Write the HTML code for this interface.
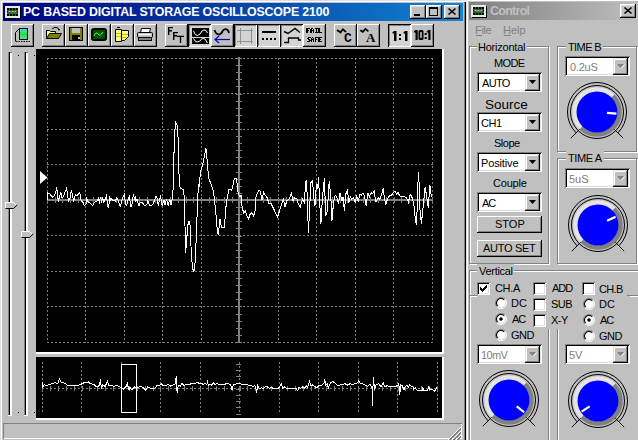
<!DOCTYPE html><html><head><meta charset="utf-8"><style>
*{margin:0;padding:0;box-sizing:border-box}
html,body{width:638px;height:440px;overflow:hidden;background:#c0c0c0;font-family:"Liberation Sans",sans-serif;font-size:11px;color:#000;position:relative}
.a{position:absolute}
.rz{position:absolute;background:#c0c0c0;box-shadow:inset -1px -1px #000,inset 1px 1px #fff,inset -2px -2px #808080}
.sk{position:absolute;background:#d4d4d4;box-shadow:inset 1px 1px #000,inset -1px -1px #fff,inset 2px 2px #808080}
.fld{position:absolute;background:#fff;box-shadow:inset 1px 1px #808080,inset -1px -1px #fff,inset 2px 2px #000,inset -2px -2px #dfdfdf}
.grp{position:absolute;border:1px solid #808080;box-shadow:inset 1px 1px #fff,1px 1px #fff}
.t{position:absolute;white-space:pre;line-height:1}
svg{position:absolute;overflow:visible}
</style></head><body>
<div class="a" style="left:0;top:0;width:466px;height:460px;box-shadow:inset 1px 1px #dfdfdf,inset 2px 2px #fff,inset -1px -1px #000,inset -2px -2px #808080"></div>
<div class="a" style="left:3px;top:3px;width:460px;height:18px;background:linear-gradient(to right,#000080,#1084d0)"></div>
<svg style="left:5px;top:6px" width="16" height="13" shape-rendering="crispEdges"><rect x="1" y="1" width="15" height="12" fill="#000"/><rect x="0" y="0" width="15" height="12" fill="#e8e8e8"/><rect x="2" y="2" width="11" height="8" fill="#207020"/><g fill="#000"><rect x="2" y="2" width="2" height="2"/><rect x="2" y="5" width="2" height="2"/><rect x="2" y="8" width="2" height="2"/><rect x="5" y="2" width="2" height="2"/><rect x="5" y="5" width="2" height="2"/><rect x="5" y="8" width="2" height="2"/><rect x="8" y="2" width="2" height="2"/><rect x="8" y="5" width="2" height="2"/><rect x="8" y="8" width="2" height="2"/><rect x="11" y="2" width="2" height="2"/><rect x="11" y="5" width="2" height="2"/><rect x="11" y="8" width="2" height="2"/></g><path d="M3 6.5 L4.5 5 L6 6.5 L7.5 5 L9 6.5 L10.5 5 L12 6.5" stroke="#e0ffe0" fill="none" shape-rendering="auto"/></svg>
<div class="t" style="left:23px;top:6px;font-size:12.4px;letter-spacing:-0.17px;color:#fff;font-weight:bold">PC BASED DIGITAL STORAGE OSCILLOSCOPE 2100</div>
<div class="rz" style="left:410px;top:5px;width:16px;height:14px;box-shadow:inset -1px -1px #000,inset 1px 1px #fff,inset -2px -2px #808080,inset 2px 2px #dfdfdf"></div>
<div class="rz" style="left:426px;top:5px;width:16px;height:14px;box-shadow:inset -1px -1px #000,inset 1px 1px #fff,inset -2px -2px #808080,inset 2px 2px #dfdfdf"></div>
<div class="rz" style="left:444px;top:5px;width:16px;height:14px;box-shadow:inset -1px -1px #000,inset 1px 1px #fff,inset -2px -2px #808080,inset 2px 2px #dfdfdf"></div>
<div class="a" style="left:414px;top:14px;width:6px;height:2px;background:#000"></div>
<div class="a" style="left:429px;top:7px;width:9px;height:9px;border:1px solid #000;border-top-width:2px"></div>
<svg style="left:448px;top:8px" width="8" height="7"><path d="M0.5 0.5 L7.5 6.5 M7.5 0.5 L0.5 6.5" stroke="#000" stroke-width="1.6"/></svg>
<div class="rz" style="left:11px;top:24px;width:23px;height:23px"></div>
<div class="rz" style="left:42px;top:24px;width:23px;height:23px"></div>
<div class="rz" style="left:65px;top:24px;width:23px;height:23px"></div>
<div class="rz" style="left:88px;top:24px;width:23px;height:23px"></div>
<div class="rz" style="left:111px;top:24px;width:23px;height:23px"></div>
<div class="rz" style="left:134px;top:24px;width:23px;height:23px"></div>
<div class="rz" style="left:165px;top:24px;width:23px;height:23px"></div>
<div class="rz" style="left:211px;top:24px;width:23px;height:23px"></div>
<div class="rz" style="left:303px;top:24px;width:23px;height:23px"></div>
<div class="rz" style="left:334px;top:24px;width:23px;height:23px"></div>
<div class="rz" style="left:357px;top:24px;width:23px;height:23px"></div>
<div class="rz" style="left:411px;top:24px;width:23px;height:23px"></div>
<div class="sk" style="left:188px;top:24px;width:23px;height:23px"></div>
<div class="sk" style="left:234px;top:24px;width:23px;height:23px"></div>
<div class="sk" style="left:257px;top:24px;width:23px;height:23px"></div>
<div class="sk" style="left:280px;top:24px;width:23px;height:23px"></div>
<div class="sk" style="left:388px;top:24px;width:23px;height:23px"></div>
<svg style="left:11px;top:24px" width="23" height="23"><defs><linearGradient id="g1" x1="0" y1="0" x2="0" y2="1"><stop offset="0" stop-color="#40e0e0"/><stop offset="0.55" stop-color="#20e040"/><stop offset="1" stop-color="#60e0c0"/></linearGradient></defs><path d="M8.5 4.5 L4.5 8.5 V17.5" stroke="#000" fill="none"/><rect x="8.5" y="4.5" width="8" height="11" fill="url(#g1)" stroke="#000"/><path d="M5 17.5 H19" stroke="#000" stroke-dasharray="1.5 1"/></svg>
<svg style="left:46px;top:26px" width="16" height="14"><path d="M6 3 Q9 0 12 2 L13 4" stroke="#000" fill="none"/><path d="M12 3 l2 0 l-1 2z" fill="#000"/><path d="M0.5 4.5 L3.5 4.5 L4.5 5.5 L9.5 5.5 L9.5 7.5 L0.5 12.5 Z" fill="#ffff80" stroke="#000"/><path d="M0.5 12.5 L3.5 7.5 L15.5 7.5 L12.5 12.5 Z" fill="#808000" stroke="#000"/></svg>
<svg style="left:69px;top:27px" width="15" height="14"><rect x="0.5" y="0.5" width="13" height="13" fill="#808000" stroke="#000"/><rect x="3" y="1" width="8" height="5" fill="#c0c0c0"/><rect x="3" y="8" width="8" height="5" fill="#000"/><rect x="9" y="10" width="2" height="2" fill="#c0c0c0"/></svg>
<svg style="left:91px;top:28px" width="17" height="14"><rect x="0.5" y="0.5" width="15" height="12" rx="2" fill="#000" stroke="#000"/><rect x="2" y="2" width="12" height="9" fill="#005000"/><path d="M3 8 Q5 3 7 6 T12 4" stroke="#40ff40" fill="none"/></svg>
<svg style="left:113px;top:27px" width="17" height="16"><path d="M2.5 2.5 L8.5 2.5 L8.5 14.5 L2.5 14.5 Z" fill="#ffff80" stroke="#000"/><path d="M8.5 3.5 L15.5 3.5 L15.5 9.5 L11.5 13.5 L8.5 13.5 Z" fill="#ffff80" stroke="#000"/><path d="M4 0.5 H7" stroke="#000"/><path d="M3 6.5 H8 M3 9.5 H8 M9 7.5 H15 M9 10.5 H13" stroke="#c0c000"/></svg>
<svg style="left:137px;top:28px" width="17" height="13"><path d="M4.5 0.5 L13.5 0.5 L12.5 4.5 L3.5 4.5 Z" fill="#fff" stroke="#000"/><rect x="0.5" y="4.5" width="15" height="5" rx="1" fill="#c0c0c0" stroke="#000"/><rect x="1.5" y="9.5" width="13" height="3" fill="#808080" stroke="#000"/><path d="M2 6.5 H14" stroke="#fff"/></svg>
<svg style="left:162px;top:22px" width="28" height="26"><path d="M6.7 5 V13 M6 5.6 H11 M6 8.7 H10 M11.7 10 V18 M11 10.6 H16 M11 13.7 H15 M15 14.4 H22 M18.5 14 V21" stroke="#000" stroke-width="1.4" fill="none"/></svg>
<svg style="left:192px;top:28px" width="17" height="16"><rect x="0" y="0" width="17" height="9" fill="#000"/><rect x="0" y="10" width="17" height="6" fill="#000"/><path d="M1.5 3 Q3 8 5.5 7.5 Q8 7 10 3 Q12 1 14 2.5 L15.5 5" stroke="#fff" fill="none"/><path d="M1.5 10.5 Q3 14 5 14 Q8 14 9.5 11 Q11 10 13 11 L15.5 15" stroke="#fff" fill="none"/></svg>
<svg style="left:213px;top:27px" width="18" height="17"><path d="M1.5 3 Q3 7.5 6 7.5 Q8 7.5 10 3.5 Q12 1.5 14 2.5 Q15.5 3.5 16 6" stroke="#000" stroke-width="1.8" fill="none"/><path d="M2 12.5 H17" stroke="#0000c0" stroke-width="1.2"/><path d="M6 9 L2 12.5 L6 16" stroke="#0000c0" fill="none" stroke-width="1.2"/></svg>
<svg style="left:236px;top:27px" width="18" height="18"><path d="M4.5 1 V17 M15.5 1 V17 M1 3.5 H17 M1 14.5 H17" stroke="#909090"/></svg>
<svg style="left:259px;top:28px" width="18" height="16"><rect x="3" y="3" width="14" height="2" fill="#000"/><g fill="#000"><rect x="3" y="10" width="2" height="2"/><rect x="7" y="10" width="2" height="2"/><rect x="11" y="10" width="2" height="2"/><rect x="15" y="10" width="2" height="2"/></g></svg>
<svg style="left:280px;top:24px" width="23" height="23"><path d="M4 7.5 L8 9.5 L15 4.5 L20 8.5" stroke="#000" fill="none" stroke-width="1.5"/><path d="M4 18.5 H8.5 V14 H18.5 V16 H21" stroke="#000" fill="none" stroke-width="1.3"/></svg>
<svg style="left:300px;top:22px" width="26" height="26" shape-rendering="crispEdges"><g fill="#000"><rect x="6" y="6" width="1" height="1"/><rect x="7" y="6" width="1" height="1"/><rect x="8" y="6" width="1" height="1"/><rect x="9" y="6" width="1" height="1"/><rect x="6" y="7" width="1" height="1"/><rect x="7" y="7" width="1" height="1"/><rect x="6" y="8" width="1" height="1"/><rect x="7" y="8" width="1" height="1"/><rect x="8" y="8" width="1" height="1"/><rect x="6" y="9" width="1" height="1"/><rect x="7" y="9" width="1" height="1"/><rect x="6" y="10" width="1" height="1"/><rect x="7" y="10" width="1" height="1"/><rect x="11" y="6" width="1" height="1"/><rect x="12" y="6" width="1" height="1"/><rect x="10" y="7" width="1" height="1"/><rect x="11" y="7" width="1" height="1"/><rect x="13" y="7" width="1" height="1"/><rect x="10" y="8" width="1" height="1"/><rect x="11" y="8" width="1" height="1"/><rect x="12" y="8" width="1" height="1"/><rect x="13" y="8" width="1" height="1"/><rect x="10" y="9" width="1" height="1"/><rect x="11" y="9" width="1" height="1"/><rect x="13" y="9" width="1" height="1"/><rect x="10" y="10" width="1" height="1"/><rect x="11" y="10" width="1" height="1"/><rect x="13" y="10" width="1" height="1"/><rect x="15" y="6" width="1" height="1"/><rect x="16" y="6" width="1" height="1"/><rect x="17" y="6" width="1" height="1"/><rect x="16" y="7" width="1" height="1"/><rect x="16" y="8" width="1" height="1"/><rect x="16" y="9" width="1" height="1"/><rect x="15" y="10" width="1" height="1"/><rect x="16" y="10" width="1" height="1"/><rect x="17" y="10" width="1" height="1"/><rect x="18" y="6" width="1" height="1"/><rect x="19" y="6" width="1" height="1"/><rect x="18" y="7" width="1" height="1"/><rect x="19" y="7" width="1" height="1"/><rect x="18" y="8" width="1" height="1"/><rect x="19" y="8" width="1" height="1"/><rect x="18" y="9" width="1" height="1"/><rect x="19" y="9" width="1" height="1"/><rect x="18" y="10" width="1" height="1"/><rect x="19" y="10" width="1" height="1"/><rect x="20" y="10" width="1" height="1"/><rect x="21" y="10" width="1" height="1"/><rect x="8" y="15" width="1" height="1"/><rect x="9" y="15" width="1" height="1"/><rect x="10" y="15" width="1" height="1"/><rect x="7" y="16" width="1" height="1"/><rect x="8" y="16" width="1" height="1"/><rect x="8" y="17" width="1" height="1"/><rect x="9" y="17" width="1" height="1"/><rect x="9" y="18" width="1" height="1"/><rect x="10" y="18" width="1" height="1"/><rect x="7" y="19" width="1" height="1"/><rect x="8" y="19" width="1" height="1"/><rect x="9" y="19" width="1" height="1"/><rect x="12" y="15" width="1" height="1"/><rect x="11" y="16" width="1" height="1"/><rect x="13" y="16" width="1" height="1"/><rect x="11" y="17" width="1" height="1"/><rect x="12" y="17" width="1" height="1"/><rect x="13" y="17" width="1" height="1"/><rect x="11" y="18" width="1" height="1"/><rect x="13" y="18" width="1" height="1"/><rect x="11" y="19" width="1" height="1"/><rect x="13" y="19" width="1" height="1"/><rect x="15" y="15" width="1" height="1"/><rect x="16" y="15" width="1" height="1"/><rect x="17" y="15" width="1" height="1"/><rect x="15" y="16" width="1" height="1"/><rect x="15" y="17" width="1" height="1"/><rect x="16" y="17" width="1" height="1"/><rect x="15" y="18" width="1" height="1"/><rect x="15" y="19" width="1" height="1"/><rect x="18" y="15" width="1" height="1"/><rect x="19" y="15" width="1" height="1"/><rect x="20" y="15" width="1" height="1"/><rect x="21" y="15" width="1" height="1"/><rect x="18" y="16" width="1" height="1"/><rect x="19" y="16" width="1" height="1"/><rect x="18" y="17" width="1" height="1"/><rect x="19" y="17" width="1" height="1"/><rect x="20" y="17" width="1" height="1"/><rect x="18" y="18" width="1" height="1"/><rect x="19" y="18" width="1" height="1"/><rect x="18" y="19" width="1" height="1"/><rect x="19" y="19" width="1" height="1"/><rect x="20" y="19" width="1" height="1"/><rect x="21" y="19" width="1" height="1"/></g></svg>
<svg style="left:336px;top:28px" width="20" height="16"><path d="M1 2 L4.5 4.5 L6.8 1.2 L10 4" stroke="#000" stroke-width="1.7" fill="none"/></svg><div class="t" style="left:344px;top:32px;font-size:13px;font-weight:bold;font-family:'Liberation Mono',monospace">C</div>
<svg style="left:359px;top:28px" width="20" height="16"><path d="M1.3 2.2 L3.8 3.8 L6.4 0.9 L9.4 3.4" stroke="#000" stroke-width="1.7" fill="none"/></svg><div class="t" style="left:366px;top:31px;font-size:13px;font-weight:bold;font-family:'Liberation Serif',serif">A</div>
<svg style="left:384px;top:20px" width="56" height="30"><g fill="#000"><path d="M10 11 h2.5 v10 h-2.5 v-7.5 h-1.5 v-1.3 z"/><rect x="15" y="14" width="2" height="2"/><rect x="15" y="18" width="2" height="2"/><path d="M21 11 h2.5 v10 h-2.5 v-7.5 h-1.5 v-1.3 z"/><path d="M31.5 10 h2.2 v10 h-2.2 v-7.5 h-1.5 v-1.3 z"/><path d="M36 10 h2 q1.5 0 1.5 1.5 v7 q0 1.5 -1.5 1.5 h-2 q-1.5 0 -1.5 -1.5 v-7 q0 -1.5 1.5 -1.5 z M36.2 12 v6 h1.6 v-6 z" fill-rule="evenodd"/><rect x="40.7" y="13" width="2" height="2"/><rect x="40.7" y="17" width="2" height="2"/><path d="M44.3 10 h2.2 v10 h-2.2 v-7.5 h-1.5 v-1.3 z"/></g></svg>
<div class="a" style="left:8px;top:52px;width:4px;height:364px;background:#fff;box-shadow:inset 0 -1px #fff,inset 1px 0 #808080,inset 2px 0 #000,inset 0 1px #808080"></div>
<div class="a" style="left:24px;top:52px;width:4px;height:364px;background:#fff;box-shadow:inset 0 -1px #fff,inset 1px 0 #808080,inset 2px 0 #000,inset 0 1px #808080"></div>
<div class="a" style="left:18px;top:55px;width:1px;height:1px;background:#000"></div>
<div class="a" style="left:18px;top:412px;width:1px;height:1px;background:#000"></div>
<div class="a" style="left:34px;top:55px;width:1px;height:1px;background:#000"></div>
<div class="a" style="left:34px;top:412px;width:1px;height:1px;background:#000"></div>
<svg style="left:5px;top:202px" width="13" height="7"><path d="M0 0 H8 L12 3.5 L8 7 H0 Z" fill="#c0c0c0"/><path d="M0.5 6.5 V0.5 H8.5 L11.5 3.5" stroke="#fff" fill="none"/><path d="M0.5 6.5 H8.5 L12.2 3" stroke="#000" fill="none"/></svg>
<svg style="left:21px;top:231px" width="13" height="7"><path d="M0 0 H8 L12 3.5 L8 7 H0 Z" fill="#c0c0c0"/><path d="M0.5 6.5 V0.5 H8.5 L11.5 3.5" stroke="#fff" fill="none"/><path d="M0.5 6.5 H8.5 L12.2 3" stroke="#000" fill="none"/></svg>
<div class="a" style="left:36px;top:49px;width:408px;height:305px;background:#fff"></div>
<div class="a" style="left:36px;top:49px;width:406px;height:303px;background:#000"></div>
<svg style="left:36px;top:49px" width="406" height="303"><path d="M11.5 9 V294" stroke="#808080" stroke-dasharray="2 2"/><path d="M49.5 9 V294" stroke="#808080" stroke-dasharray="2 2"/><path d="M88.5 9 V294" stroke="#808080" stroke-dasharray="2 2"/><path d="M126.5 9 V294" stroke="#808080" stroke-dasharray="2 2"/><path d="M165.5 9 V294" stroke="#808080" stroke-dasharray="2 2"/><path d="M242.5 9 V294" stroke="#808080" stroke-dasharray="2 2"/><path d="M280.5 9 V294" stroke="#808080" stroke-dasharray="2 2"/><path d="M319.5 9 V294" stroke="#808080" stroke-dasharray="2 2"/><path d="M357.5 9 V294" stroke="#808080" stroke-dasharray="2 2"/><path d="M396.5 9 V294" stroke="#808080" stroke-dasharray="2 2"/><path d="M11 9.5 H397" stroke="#808080" stroke-dasharray="2 2"/><path d="M11 44.5 H397" stroke="#808080" stroke-dasharray="2 2"/><path d="M11 80.5 H397" stroke="#808080" stroke-dasharray="2 2"/><path d="M11 115.5 H397" stroke="#808080" stroke-dasharray="2 2"/><path d="M11 186.5 H397" stroke="#808080" stroke-dasharray="2 2"/><path d="M11 222.5 H397" stroke="#808080" stroke-dasharray="2 2"/><path d="M11 257.5 H397" stroke="#808080" stroke-dasharray="2 2"/><path d="M11 293.5 H397" stroke="#808080" stroke-dasharray="2 2"/><rect x="202" y="8" width="2" height="286" fill="#808080"/><rect x="11" y="150" width="386" height="2" fill="#808080"/><rect x="200" y="9" width="6" height="1" fill="#808080"/><rect x="200" y="16" width="6" height="1" fill="#808080"/><rect x="200" y="23" width="6" height="1" fill="#808080"/><rect x="200" y="30" width="6" height="1" fill="#808080"/><rect x="200" y="37" width="6" height="1" fill="#808080"/><rect x="200" y="45" width="6" height="1" fill="#808080"/><rect x="200" y="52" width="6" height="1" fill="#808080"/><rect x="200" y="59" width="6" height="1" fill="#808080"/><rect x="200" y="66" width="6" height="1" fill="#808080"/><rect x="200" y="73" width="6" height="1" fill="#808080"/><rect x="200" y="80" width="6" height="1" fill="#808080"/><rect x="200" y="87" width="6" height="1" fill="#808080"/><rect x="200" y="94" width="6" height="1" fill="#808080"/><rect x="200" y="101" width="6" height="1" fill="#808080"/><rect x="200" y="108" width="6" height="1" fill="#808080"/><rect x="200" y="115" width="6" height="1" fill="#808080"/><rect x="200" y="123" width="6" height="1" fill="#808080"/><rect x="200" y="130" width="6" height="1" fill="#808080"/><rect x="200" y="137" width="6" height="1" fill="#808080"/><rect x="200" y="144" width="6" height="1" fill="#808080"/><rect x="200" y="151" width="6" height="1" fill="#808080"/><rect x="200" y="158" width="6" height="1" fill="#808080"/><rect x="200" y="165" width="6" height="1" fill="#808080"/><rect x="200" y="172" width="6" height="1" fill="#808080"/><rect x="200" y="179" width="6" height="1" fill="#808080"/><rect x="200" y="187" width="6" height="1" fill="#808080"/><rect x="200" y="194" width="6" height="1" fill="#808080"/><rect x="200" y="201" width="6" height="1" fill="#808080"/><rect x="200" y="208" width="6" height="1" fill="#808080"/><rect x="200" y="215" width="6" height="1" fill="#808080"/><rect x="200" y="222" width="6" height="1" fill="#808080"/><rect x="200" y="229" width="6" height="1" fill="#808080"/><rect x="200" y="236" width="6" height="1" fill="#808080"/><rect x="200" y="243" width="6" height="1" fill="#808080"/><rect x="200" y="250" width="6" height="1" fill="#808080"/><rect x="200" y="257" width="6" height="1" fill="#808080"/><rect x="200" y="265" width="6" height="1" fill="#808080"/><rect x="200" y="272" width="6" height="1" fill="#808080"/><rect x="200" y="279" width="6" height="1" fill="#808080"/><rect x="200" y="286" width="6" height="1" fill="#808080"/><rect x="200" y="293" width="6" height="1" fill="#808080"/><rect x="11" y="148" width="1" height="6" fill="#808080"/><rect x="19" y="148" width="1" height="6" fill="#808080"/><rect x="26" y="148" width="1" height="6" fill="#808080"/><rect x="34" y="148" width="1" height="6" fill="#808080"/><rect x="42" y="148" width="1" height="6" fill="#808080"/><rect x="50" y="148" width="1" height="6" fill="#808080"/><rect x="57" y="148" width="1" height="6" fill="#808080"/><rect x="65" y="148" width="1" height="6" fill="#808080"/><rect x="73" y="148" width="1" height="6" fill="#808080"/><rect x="80" y="148" width="1" height="6" fill="#808080"/><rect x="88" y="148" width="1" height="6" fill="#808080"/><rect x="96" y="148" width="1" height="6" fill="#808080"/><rect x="103" y="148" width="1" height="6" fill="#808080"/><rect x="111" y="148" width="1" height="6" fill="#808080"/><rect x="119" y="148" width="1" height="6" fill="#808080"/><rect x="126" y="148" width="1" height="6" fill="#808080"/><rect x="134" y="148" width="1" height="6" fill="#808080"/><rect x="142" y="148" width="1" height="6" fill="#808080"/><rect x="150" y="148" width="1" height="6" fill="#808080"/><rect x="157" y="148" width="1" height="6" fill="#808080"/><rect x="165" y="148" width="1" height="6" fill="#808080"/><rect x="173" y="148" width="1" height="6" fill="#808080"/><rect x="180" y="148" width="1" height="6" fill="#808080"/><rect x="188" y="148" width="1" height="6" fill="#808080"/><rect x="196" y="148" width="1" height="6" fill="#808080"/><rect x="204" y="148" width="1" height="6" fill="#808080"/><rect x="211" y="148" width="1" height="6" fill="#808080"/><rect x="219" y="148" width="1" height="6" fill="#808080"/><rect x="227" y="148" width="1" height="6" fill="#808080"/><rect x="234" y="148" width="1" height="6" fill="#808080"/><rect x="242" y="148" width="1" height="6" fill="#808080"/><rect x="250" y="148" width="1" height="6" fill="#808080"/><rect x="257" y="148" width="1" height="6" fill="#808080"/><rect x="265" y="148" width="1" height="6" fill="#808080"/><rect x="273" y="148" width="1" height="6" fill="#808080"/><rect x="280" y="148" width="1" height="6" fill="#808080"/><rect x="288" y="148" width="1" height="6" fill="#808080"/><rect x="296" y="148" width="1" height="6" fill="#808080"/><rect x="304" y="148" width="1" height="6" fill="#808080"/><rect x="311" y="148" width="1" height="6" fill="#808080"/><rect x="319" y="148" width="1" height="6" fill="#808080"/><rect x="327" y="148" width="1" height="6" fill="#808080"/><rect x="334" y="148" width="1" height="6" fill="#808080"/><rect x="342" y="148" width="1" height="6" fill="#808080"/><rect x="350" y="148" width="1" height="6" fill="#808080"/><rect x="358" y="148" width="1" height="6" fill="#808080"/><rect x="365" y="148" width="1" height="6" fill="#808080"/><rect x="373" y="148" width="1" height="6" fill="#808080"/><rect x="381" y="148" width="1" height="6" fill="#808080"/><rect x="388" y="148" width="1" height="6" fill="#808080"/><rect x="396" y="148" width="1" height="6" fill="#808080"/><polygon points="4,122 11.5,128.5 4,135" fill="#fff"/><polyline points="11.4,151.4 11.7,144.0 12.7,144.3 14.1,145.3 16.2,148.4 17.9,147.0 19.6,144.3 20.6,138.5 21.6,144.6 22.3,152.8 23.7,147.4 24.7,143.0 26.0,148.7 27.4,147.4 28.8,144.0 30.5,139.5 31.5,145.3 32.5,151.8 34.2,148.7 35.2,141.6 36.6,146.3 37.6,152.8 39.3,145.7 40.7,147.0 43.4,143.6 44.7,146.6 45.1,152.6 46.8,152.9 47.9,156.1 48.9,156.5 50.0,155.0 50.7,148.3 51.4,152.2 52.5,152.9 53.9,154.0 55.3,155.0 56.7,156.8 58.1,153.6 59.5,152.9 60.9,151.9 62.3,149.4 63.4,152.9 64.5,148.3 65.5,152.2 66.6,148.0 67.6,154.0 68.7,150.1 69.7,150.1 70.4,145.2 71.2,152.9 72.2,159.3 72.9,156.5 73.6,148.7 74.7,150.8 75.7,149.8 76.8,151.5 77.9,151.2 79.3,151.9 80.7,149.0 81.7,149.4 82.8,154.0 83.5,155.0 84.4,157.9 85.4,152.9 87.2,147.6 88.2,145.2 89.3,153.6 90.3,156.5 91.4,153.6 92.5,148.7 93.5,146.9 94.6,157.2 95.6,157.9 96.7,150.8 97.4,145.2 98.5,150.1 99.2,148.3 99.9,152.2 100.9,150.1 102.0,153.6 103.0,156.5 104.1,154.0 105.2,153.6 106.6,154.0 108.0,156.1 109.4,156.5 110.8,155.7 111.9,151.9 112.9,155.0 114.3,156.8 115.7,156.5 117.1,154.7 118.6,151.2 119.6,148.0 120.7,147.3 121.4,152.2 122.4,156.5 123.5,150.5 124.6,147.6 125.6,153.6 126.3,157.2 127.4,152.9 128.1,150.8 129.1,156.4 130.5,150.3 132.2,156.4 133.8,150.3 135.2,156.4 136.7,147.2 137.3,136.0 137.6,131.5 138.2,91.5 139.5,73.3 141.8,77.8 142.5,111.0 143.4,136.0 144.4,139.0 147.5,141.0 148.5,150.3 149.0,177.0 149.6,203.5 150.6,193.3 151.6,177.0 153.0,171.8 154.3,177.0 155.0,197.3 156.3,217.8 157.7,223.0 158.8,217.8 160.4,187.0 161.4,156.4 162.4,136.0 163.1,137.0 164.4,123.7 166.6,115.5 168.5,107.3 169.9,99.2 171.3,112.8 172.6,129.0 175.9,137.3 177.5,142.8 179.4,159.0 181.3,181.0 182.2,186.4 184.0,170.0 185.4,178.2 188.4,178.2 190.3,153.7 193.0,140.0 195.8,141.4 198.5,129.1 200.4,129.1 202.2,144.6 203.8,147.8 205.0,146.2 206.2,158.9 207.7,163.7 209.3,162.1 210.9,166.9 212.5,170.0 214.1,165.3 215.7,163.7 217.3,166.9 218.9,163.7 220.0,147.8 221.3,144.6 222.8,141.4 224.4,142.2 226.0,151.0 227.6,143.0 229.2,146.2 230.8,147.8 233.2,155.0 234.8,154.2 237.2,158.9 239.5,163.7 241.6,167.7 243.5,162.1 245.9,154.2 247.5,150.2 249.1,158.1 250.7,151.8 253.0,150.2 255.4,144.6 257.0,151.8 258.6,148.6 261.0,150.2 262.6,155.7 264.2,158.1 266.6,150.2 268.2,153.4 269.7,133.5 270.5,131.1 271.4,152.6 272.4,184.0 273.8,155.7 275.0,133.5 276.6,131.9 277.7,147.8 278.9,157.3 280.4,135.1 281.7,139.8 282.5,127.9 283.6,151.0 284.9,174.8 286.5,147.8 288.4,128.7 289.7,166.9 291.3,162.1 293.2,131.9 294.8,147.8 296.0,171.6 297.6,152.6 299.2,146.2 300.8,147.8 302.4,155.0 304.0,143.8 305.9,151.8 307.2,147.8 308.4,162.1 310.0,144.6 311.6,141.4 312.7,154.2 314.3,147.8 315.9,150.2 317.5,148.6 319.1,153.4 320.7,147.0 322.3,152.6 323.8,145.4 325.4,146.2 327.0,143.8 328.6,147.0 330.2,157.3 331.8,143.8 333.4,147.8 335.0,143.8 336.6,144.6 338.2,142.2 339.7,152.6 340.6,152.3 342.2,148.4 343.8,150.7 345.7,145.2 347.3,138.8 348.2,147.6 349.8,155.5 351.7,149.2 353.6,146.8 355.7,146.0 357.3,143.6 358.9,142.0 360.5,145.2 362.0,143.6 363.6,146.8 366.0,147.6 368.4,147.6 370.8,149.2 372.4,153.1 374.3,145.2 376.4,149.2 378.0,157.1 379.5,171.4 380.7,176.2 381.6,139.6 382.7,122.9 383.8,158.7 385.4,174.6 387.0,158.7 389.1,138.0 390.7,147.6 392.3,158.7 393.8,135.6 395.4,147.6 396.2,148.4" stroke="#fff" fill="none" stroke-width="1" shape-rendering="crispEdges"/></svg>
<div class="a" style="left:36px;top:357px;width:408px;height:63px;background:#fff"></div>
<div class="a" style="left:36px;top:357px;width:406px;height:61px;background:#000"></div>
<svg style="left:36px;top:357px" width="406" height="61"><path d="M6.5 5 V56" stroke="#808080" stroke-dasharray="2 2"/><path d="M45.5 5 V56" stroke="#808080" stroke-dasharray="2 2"/><path d="M85.5 5 V56" stroke="#808080" stroke-dasharray="2 2"/><path d="M124.5 5 V56" stroke="#808080" stroke-dasharray="2 2"/><path d="M164.5 5 V56" stroke="#808080" stroke-dasharray="2 2"/><path d="M203.5 5 V56" stroke="#808080" stroke-dasharray="2 2"/><path d="M243.5 5 V56" stroke="#808080" stroke-dasharray="2 2"/><path d="M282.5 5 V56" stroke="#808080" stroke-dasharray="2 2"/><path d="M322.5 5 V56" stroke="#808080" stroke-dasharray="2 2"/><path d="M361.5 5 V56" stroke="#808080" stroke-dasharray="2 2"/><path d="M401.5 5 V56" stroke="#808080" stroke-dasharray="2 2"/><path d="M6 31.5 H402" stroke="#808080" stroke-dasharray="2 2"/><rect x="200" y="7" width="5" height="1" fill="#808080"/><rect x="200" y="13" width="5" height="1" fill="#808080"/><rect x="200" y="19" width="5" height="1" fill="#808080"/><rect x="200" y="26" width="5" height="1" fill="#808080"/><rect x="200" y="32" width="5" height="1" fill="#808080"/><rect x="200" y="38" width="5" height="1" fill="#808080"/><rect x="200" y="44" width="5" height="1" fill="#808080"/><rect x="200" y="50" width="5" height="1" fill="#808080"/><rect x="200" y="57" width="5" height="1" fill="#808080"/><rect x="6" y="29" width="1" height="5" fill="#808080"/><rect x="14" y="29" width="1" height="5" fill="#808080"/><rect x="22" y="29" width="1" height="5" fill="#808080"/><rect x="30" y="29" width="1" height="5" fill="#808080"/><rect x="38" y="29" width="1" height="5" fill="#808080"/><rect x="46" y="29" width="1" height="5" fill="#808080"/><rect x="53" y="29" width="1" height="5" fill="#808080"/><rect x="61" y="29" width="1" height="5" fill="#808080"/><rect x="69" y="29" width="1" height="5" fill="#808080"/><rect x="77" y="29" width="1" height="5" fill="#808080"/><rect x="85" y="29" width="1" height="5" fill="#808080"/><rect x="93" y="29" width="1" height="5" fill="#808080"/><rect x="101" y="29" width="1" height="5" fill="#808080"/><rect x="109" y="29" width="1" height="5" fill="#808080"/><rect x="117" y="29" width="1" height="5" fill="#808080"/><rect x="124" y="29" width="1" height="5" fill="#808080"/><rect x="132" y="29" width="1" height="5" fill="#808080"/><rect x="140" y="29" width="1" height="5" fill="#808080"/><rect x="148" y="29" width="1" height="5" fill="#808080"/><rect x="156" y="29" width="1" height="5" fill="#808080"/><rect x="164" y="29" width="1" height="5" fill="#808080"/><rect x="172" y="29" width="1" height="5" fill="#808080"/><rect x="180" y="29" width="1" height="5" fill="#808080"/><rect x="188" y="29" width="1" height="5" fill="#808080"/><rect x="196" y="29" width="1" height="5" fill="#808080"/><rect x="204" y="29" width="1" height="5" fill="#808080"/><rect x="211" y="29" width="1" height="5" fill="#808080"/><rect x="219" y="29" width="1" height="5" fill="#808080"/><rect x="227" y="29" width="1" height="5" fill="#808080"/><rect x="235" y="29" width="1" height="5" fill="#808080"/><rect x="243" y="29" width="1" height="5" fill="#808080"/><rect x="251" y="29" width="1" height="5" fill="#808080"/><rect x="259" y="29" width="1" height="5" fill="#808080"/><rect x="267" y="29" width="1" height="5" fill="#808080"/><rect x="275" y="29" width="1" height="5" fill="#808080"/><rect x="282" y="29" width="1" height="5" fill="#808080"/><rect x="290" y="29" width="1" height="5" fill="#808080"/><rect x="298" y="29" width="1" height="5" fill="#808080"/><rect x="306" y="29" width="1" height="5" fill="#808080"/><rect x="314" y="29" width="1" height="5" fill="#808080"/><rect x="322" y="29" width="1" height="5" fill="#808080"/><rect x="330" y="29" width="1" height="5" fill="#808080"/><rect x="338" y="29" width="1" height="5" fill="#808080"/><rect x="346" y="29" width="1" height="5" fill="#808080"/><rect x="354" y="29" width="1" height="5" fill="#808080"/><rect x="362" y="29" width="1" height="5" fill="#808080"/><rect x="369" y="29" width="1" height="5" fill="#808080"/><rect x="377" y="29" width="1" height="5" fill="#808080"/><rect x="385" y="29" width="1" height="5" fill="#808080"/><rect x="393" y="29" width="1" height="5" fill="#808080"/><rect x="401" y="29" width="1" height="5" fill="#808080"/><polyline points="6.5,25.5 6.8,30.0 8.4,27.4 10.3,28.7 12.8,27.4 15.9,26.8 19.0,25.5 21.6,26.8 23.4,21.8 24.7,24.9 27.2,25.5 29.7,26.8 31.0,28.0 34.1,28.0 37.2,28.7 40.4,28.7 42.9,28.0 46.0,26.8 48.5,25.5 51.0,25.5 52.3,24.9 53.5,26.2 55.4,26.8 57.9,27.4 59.8,29.3 62.3,29.3 63.6,28.0 64.4,21.8 65.4,31.8 66.7,28.0 69.2,29.3 71.5,24.3 72.7,28.7 74.8,28.0 77.4,29.3 79.9,28.7 81.5,28.7 84.0,29.9 85.9,31.2 87.2,32.4 89.0,30.6 90.3,29.3 91.3,25.5 92.2,30.6 93.0,33.0 94.0,29.9 95.3,33.0 96.6,31.8 98.4,29.9 101.0,31.2 103.5,29.9 106.0,29.9 108.5,31.8 109.7,33.0 111.6,29.9 114.0,31.2 116.6,31.2 119.1,31.2 121.0,28.0 122.9,28.7 125.4,26.8 127.3,28.7 129.8,28.7 132.3,27.4 134.8,29.3 137.3,28.0 139.2,26.8 140.2,19.3 141.1,35.6 142.3,28.0 144.2,29.3 146.1,26.2 148.0,28.7 150.5,27.4 153.0,28.0 154.9,26.8 156.7,26.8 159.0,26.2 162.2,25.5 163.4,26.8 165.3,26.2 167.2,27.4 169.0,26.2 170.9,28.0 171.6,23.0 172.2,28.7 174.0,26.8 175.3,28.7 177.2,25.5 179.1,27.4 181.0,26.2 182.8,27.4 185.3,27.4 187.9,27.4 190.4,26.8 192.9,26.8 194.8,28.0 196.0,33.0 197.3,27.4 199.1,27.4 201.0,26.8 203.5,26.8 206.7,27.4 209.8,27.4 211.7,28.0 214.2,28.0 216.7,29.3 218.6,28.7 219.8,30.6 220.5,36.2 221.7,28.7 223.6,31.8 225.5,30.6 227.4,31.8 229.2,29.9 231.5,29.9 233.4,31.2 235.3,30.3 237.8,31.8 240.3,31.2 242.2,31.8 244.0,29.3 245.3,26.8 246.6,31.2 248.4,29.9 250.3,31.2 254.1,31.2 257.8,31.2 260.3,31.8 261.6,33.7 262.9,30.6 264.7,31.2 266.6,29.9 268.5,31.2 270.4,28.7 271.6,29.9 273.5,24.3 274.8,28.7 276.6,28.0 279.2,29.9 281.0,30.6 282.9,28.7 286.1,28.0 287.9,26.2 288.6,22.4 289.8,28.0 291.1,26.8 292.3,31.2 294.2,26.2 296.7,24.3 299.2,26.2 301.1,28.0 304.2,28.0 306.5,27.4 309.0,26.8 311.5,28.0 314.0,26.8 316.5,27.4 319.0,26.8 321.6,25.6 322.8,23.7 324.7,26.8 326.6,26.8 329.1,28.0 331.6,29.3 334.1,27.4 336.0,31.2 336.6,49.4 337.2,19.9 338.5,31.8 340.4,27.4 342.9,26.8 344.8,29.9 347.3,26.2 349.1,29.9 351.0,28.7 353.5,29.3 356.0,29.9 358.5,29.9 361.1,28.7 362.9,26.8 363.6,38.1 364.8,28.0 366.1,28.2 368.1,33.0 369.2,29.6 370.9,28.2 372.3,30.2 373.7,27.5 375.0,28.9 376.8,29.6 377.8,32.3 379.2,30.9 381.2,33.0 383.3,33.7 386.1,33.7 386.8,29.6 387.4,33.3 389.5,33.3 391.6,33.3 393.0,29.6 394.0,33.0 396.4,32.3 398.5,34.4 399.9,32.3 401.2,29.6" stroke="#fff" fill="none" stroke-width="1" shape-rendering="crispEdges"/><rect x="85.5" y="7.5" width="15" height="48" stroke="#fff" fill="none"/></svg>
<div class="a" style="left:3px;top:423px;width:459px;height:16px;box-shadow:inset 1px 1px #808080,inset -1px -1px #fff"></div>
<svg style="left:447px;top:425px" width="14" height="15" shape-rendering="crispEdges"><rect x="1" y="14" width="1" height="1" fill="#fff"/><rect x="2" y="14" width="1" height="1" fill="#808080"/><rect x="3" y="14" width="1" height="1" fill="#808080"/><rect x="2" y="13" width="1" height="1" fill="#fff"/><rect x="3" y="13" width="1" height="1" fill="#808080"/><rect x="4" y="13" width="1" height="1" fill="#808080"/><rect x="3" y="12" width="1" height="1" fill="#fff"/><rect x="4" y="12" width="1" height="1" fill="#808080"/><rect x="5" y="12" width="1" height="1" fill="#808080"/><rect x="4" y="11" width="1" height="1" fill="#fff"/><rect x="5" y="11" width="1" height="1" fill="#808080"/><rect x="6" y="11" width="1" height="1" fill="#808080"/><rect x="5" y="10" width="1" height="1" fill="#fff"/><rect x="6" y="10" width="1" height="1" fill="#808080"/><rect x="7" y="10" width="1" height="1" fill="#808080"/><rect x="6" y="9" width="1" height="1" fill="#fff"/><rect x="7" y="9" width="1" height="1" fill="#808080"/><rect x="8" y="9" width="1" height="1" fill="#808080"/><rect x="7" y="8" width="1" height="1" fill="#fff"/><rect x="8" y="8" width="1" height="1" fill="#808080"/><rect x="9" y="8" width="1" height="1" fill="#808080"/><rect x="8" y="7" width="1" height="1" fill="#fff"/><rect x="9" y="7" width="1" height="1" fill="#808080"/><rect x="10" y="7" width="1" height="1" fill="#808080"/><rect x="9" y="6" width="1" height="1" fill="#fff"/><rect x="10" y="6" width="1" height="1" fill="#808080"/><rect x="11" y="6" width="1" height="1" fill="#808080"/><rect x="10" y="5" width="1" height="1" fill="#fff"/><rect x="11" y="5" width="1" height="1" fill="#808080"/><rect x="12" y="5" width="1" height="1" fill="#808080"/><rect x="11" y="4" width="1" height="1" fill="#fff"/><rect x="12" y="4" width="1" height="1" fill="#808080"/><rect x="13" y="4" width="1" height="1" fill="#808080"/><rect x="12" y="3" width="1" height="1" fill="#fff"/><rect x="13" y="3" width="1" height="1" fill="#808080"/><rect x="13" y="2" width="1" height="1" fill="#fff"/><rect x="5" y="14" width="1" height="1" fill="#fff"/><rect x="6" y="14" width="1" height="1" fill="#808080"/><rect x="7" y="14" width="1" height="1" fill="#808080"/><rect x="6" y="13" width="1" height="1" fill="#fff"/><rect x="7" y="13" width="1" height="1" fill="#808080"/><rect x="8" y="13" width="1" height="1" fill="#808080"/><rect x="7" y="12" width="1" height="1" fill="#fff"/><rect x="8" y="12" width="1" height="1" fill="#808080"/><rect x="9" y="12" width="1" height="1" fill="#808080"/><rect x="8" y="11" width="1" height="1" fill="#fff"/><rect x="9" y="11" width="1" height="1" fill="#808080"/><rect x="10" y="11" width="1" height="1" fill="#808080"/><rect x="9" y="10" width="1" height="1" fill="#fff"/><rect x="10" y="10" width="1" height="1" fill="#808080"/><rect x="11" y="10" width="1" height="1" fill="#808080"/><rect x="10" y="9" width="1" height="1" fill="#fff"/><rect x="11" y="9" width="1" height="1" fill="#808080"/><rect x="12" y="9" width="1" height="1" fill="#808080"/><rect x="11" y="8" width="1" height="1" fill="#fff"/><rect x="12" y="8" width="1" height="1" fill="#808080"/><rect x="13" y="8" width="1" height="1" fill="#808080"/><rect x="12" y="7" width="1" height="1" fill="#fff"/><rect x="13" y="7" width="1" height="1" fill="#808080"/><rect x="13" y="6" width="1" height="1" fill="#fff"/><rect x="9" y="14" width="1" height="1" fill="#fff"/><rect x="10" y="14" width="1" height="1" fill="#808080"/><rect x="11" y="14" width="1" height="1" fill="#808080"/><rect x="10" y="13" width="1" height="1" fill="#fff"/><rect x="11" y="13" width="1" height="1" fill="#808080"/><rect x="12" y="13" width="1" height="1" fill="#808080"/><rect x="11" y="12" width="1" height="1" fill="#fff"/><rect x="12" y="12" width="1" height="1" fill="#808080"/><rect x="13" y="12" width="1" height="1" fill="#808080"/><rect x="12" y="11" width="1" height="1" fill="#fff"/><rect x="13" y="11" width="1" height="1" fill="#808080"/><rect x="13" y="10" width="1" height="1" fill="#fff"/></svg>
<div class="a" style="left:466px;top:-1px;width:200px;height:460px;box-shadow:inset 1px 1px #dfdfdf,inset 2px 2px #fff"></div>
<div class="a" style="left:469px;top:2px;width:175px;height:18px;background:linear-gradient(to right,#808080,#c0c0c0)"></div>
<svg style="left:471px;top:5px" width="16" height="13" shape-rendering="crispEdges"><rect x="1" y="1" width="15" height="12" fill="#000"/><rect x="0" y="0" width="15" height="12" fill="#e8e8e8"/><rect x="2" y="2" width="11" height="8" fill="#207020"/><g fill="#000"><rect x="2" y="2" width="2" height="2"/><rect x="2" y="5" width="2" height="2"/><rect x="2" y="8" width="2" height="2"/><rect x="5" y="2" width="2" height="2"/><rect x="5" y="5" width="2" height="2"/><rect x="5" y="8" width="2" height="2"/><rect x="8" y="2" width="2" height="2"/><rect x="8" y="5" width="2" height="2"/><rect x="8" y="8" width="2" height="2"/><rect x="11" y="2" width="2" height="2"/><rect x="11" y="5" width="2" height="2"/><rect x="11" y="8" width="2" height="2"/></g><path d="M3 6.5 L4.5 5 L6 6.5 L7.5 5 L9 6.5 L10.5 5 L12 6.5" stroke="#e0ffe0" fill="none" shape-rendering="auto"/></svg>
<div class="t" style="left:490px;top:5px;font-size:12.4px;letter-spacing:-0.67px;color:#c0c0c0;font-weight:bold">Control</div>
<div class="rz" style="left:620px;top:4px;width:16px;height:14px;box-shadow:inset -1px -1px #000,inset 1px 1px #fff,inset -2px -2px #808080,inset 2px 2px #dfdfdf"></div>
<svg style="left:624px;top:7px" width="8" height="7"><path d="M0.5 0.5 L7.5 6.5 M7.5 0.5 L0.5 6.5" stroke="#000" stroke-width="1.6"/></svg>
<div class="t" style="left:475px;top:25px;font-size:11px;letter-spacing:-0.33px;color:#808080">File</div>
<div class="t" style="left:503px;top:25px;font-size:11px;letter-spacing:0.0px;color:#808080">Help</div>
<div class="a" style="left:476px;top:35px;width:6px;height:1px;background:#808080"></div>
<div class="a" style="left:504px;top:35px;width:7px;height:1px;background:#808080"></div>
<div class="grp" style="left:469px;top:46px;width:80px;height:218px"></div>
<div class="grp" style="left:557px;top:46px;width:80px;height:106px"></div>
<div class="grp" style="left:557px;top:158px;width:80px;height:106px"></div>
<div class="grp" style="left:469px;top:270px;width:191px;height:190px"></div>
<div class="grp" style="left:469px;top:295px;width:80px;height:165px"></div>
<div class="grp" style="left:557px;top:295px;width:103px;height:165px"></div>
<div class="a" style="left:477px;top:40px;width:50px;height:13px;background:#c0c0c0"></div><div class="t" style="left:478px;top:42px;font-size:11px;letter-spacing:-0.22px;color:#000000">Horizontal</div>
<div class="a" style="left:566px;top:40px;width:37px;height:13px;background:#c0c0c0"></div><div class="t" style="left:568px;top:42px;font-size:11px;letter-spacing:-0.6px;color:#000000">TIME B</div>
<div class="a" style="left:566px;top:151px;width:38px;height:13px;background:#c0c0c0"></div><div class="t" style="left:568px;top:153px;font-size:11px;letter-spacing:-0.4px;color:#000000">TIME A</div>
<div class="a" style="left:477px;top:264px;width:37px;height:13px;background:#c0c0c0"></div><div class="t" style="left:479px;top:266px;font-size:11px;letter-spacing:-0.29px;color:#000000">Vertical</div>
<div class="t" style="left:494px;top:58px;font-size:11px;letter-spacing:-0.67px;color:#000000">MODE</div>
<div class="t" style="left:485px;top:98px;font-size:13.5px;letter-spacing:0.0px;color:#000000">Source</div>
<div class="t" style="left:494px;top:138px;font-size:11px;letter-spacing:-0.5px;color:#000000">Slope</div>
<div class="t" style="left:493px;top:178px;font-size:11px;letter-spacing:-0.2px;color:#000000">Couple</div>
<div class="fld" style="left:477px;top:72px;width:65px;height:20px"></div>
<div class="rz" style="left:525px;top:74px;width:15px;height:17px;box-shadow:inset -1px -1px #000,inset 1px 1px #dfdfdf,inset -2px -2px #808080,inset 2px 2px #fff"></div>
<svg style="left:529px;top:80px" width="8" height="5"><path d="M0 0 H7 L3.5 4 Z" fill="#000000"/></svg>
<div class="t" style="left:482px;top:78px;font-size:11px;letter-spacing:-0.67px;color:#000000">AUTO</div>
<div class="fld" style="left:477px;top:112px;width:65px;height:20px"></div>
<div class="rz" style="left:525px;top:114px;width:15px;height:17px;box-shadow:inset -1px -1px #000,inset 1px 1px #dfdfdf,inset -2px -2px #808080,inset 2px 2px #fff"></div>
<svg style="left:529px;top:120px" width="8" height="5"><path d="M0 0 H7 L3.5 4 Z" fill="#000000"/></svg>
<div class="t" style="left:481px;top:118px;font-size:11px;letter-spacing:-0.5px;color:#000000">CH1</div>
<div class="fld" style="left:477px;top:152px;width:65px;height:20px"></div>
<div class="rz" style="left:525px;top:154px;width:15px;height:17px;box-shadow:inset -1px -1px #000,inset 1px 1px #dfdfdf,inset -2px -2px #808080,inset 2px 2px #fff"></div>
<svg style="left:529px;top:160px" width="8" height="5"><path d="M0 0 H7 L3.5 4 Z" fill="#000000"/></svg>
<div class="t" style="left:481px;top:158px;font-size:11px;letter-spacing:-0.14px;color:#000000">Positive</div>
<div class="fld" style="left:477px;top:192px;width:65px;height:20px"></div>
<div class="rz" style="left:525px;top:194px;width:15px;height:17px;box-shadow:inset -1px -1px #000,inset 1px 1px #dfdfdf,inset -2px -2px #808080,inset 2px 2px #fff"></div>
<svg style="left:529px;top:200px" width="8" height="5"><path d="M0 0 H7 L3.5 4 Z" fill="#000000"/></svg>
<div class="t" style="left:482px;top:198px;font-size:11px;letter-spacing:-1.2px;color:#000000">AC</div>
<div class="rz" style="left:477px;top:216px;width:65px;height:17px"></div>
<div class="t" style="left:495px;top:219px;font-size:11px;letter-spacing:0.0px;color:#000000">STOP</div>
<div class="rz" style="left:477px;top:240px;width:65px;height:17px"></div>
<div class="t" style="left:483px;top:243px;font-size:11px;letter-spacing:-0.29px;color:#000000">AUTO SET</div>
<div class="fld" style="left:565px;top:56px;width:65px;height:20px"></div>
<div class="rz" style="left:613px;top:58px;width:15px;height:17px;box-shadow:inset -1px -1px #000,inset 1px 1px #dfdfdf,inset -2px -2px #808080,inset 2px 2px #fff"></div>
<svg style="left:617px;top:64px" width="8" height="5"><path d="M0 0 H7 L3.5 4 Z" fill="#808080"/></svg>
<svg style="left:617px;top:64px" width="8" height="6"><path d="M7.5 0.5 L4 4.5" stroke="#fff"/></svg>
<div class="t" style="left:570px;top:62px;font-size:11px;letter-spacing:-0.25px;color:#808080">0.2uS</div>
<div class="fld" style="left:565px;top:168px;width:65px;height:20px"></div>
<div class="rz" style="left:613px;top:170px;width:15px;height:17px;box-shadow:inset -1px -1px #000,inset 1px 1px #dfdfdf,inset -2px -2px #808080,inset 2px 2px #fff"></div>
<svg style="left:617px;top:176px" width="8" height="5"><path d="M0 0 H7 L3.5 4 Z" fill="#808080"/></svg>
<svg style="left:617px;top:176px" width="8" height="6"><path d="M7.5 0.5 L4 4.5" stroke="#fff"/></svg>
<div class="t" style="left:569px;top:174px;font-size:11px;letter-spacing:0.0px;color:#808080">5uS</div>
<div class="fld" style="left:477px;top:344px;width:65px;height:20px"></div>
<div class="rz" style="left:525px;top:346px;width:15px;height:17px;box-shadow:inset -1px -1px #000,inset 1px 1px #dfdfdf,inset -2px -2px #808080,inset 2px 2px #fff"></div>
<svg style="left:529px;top:352px" width="8" height="5"><path d="M0 0 H7 L3.5 4 Z" fill="#808080"/></svg>
<svg style="left:529px;top:352px" width="8" height="6"><path d="M7.5 0.5 L4 4.5" stroke="#fff"/></svg>
<div class="t" style="left:481px;top:350px;font-size:11px;letter-spacing:-0.67px;color:#808080">10mV</div>
<div class="fld" style="left:565px;top:344px;width:65px;height:20px"></div>
<div class="rz" style="left:613px;top:346px;width:15px;height:17px;box-shadow:inset -1px -1px #000,inset 1px 1px #dfdfdf,inset -2px -2px #808080,inset 2px 2px #fff"></div>
<svg style="left:617px;top:352px" width="8" height="5"><path d="M0 0 H7 L3.5 4 Z" fill="#808080"/></svg>
<svg style="left:617px;top:352px" width="8" height="6"><path d="M7.5 0.5 L4 4.5" stroke="#fff"/></svg>
<div class="t" style="left:569px;top:350px;font-size:11px;letter-spacing:0.0px;color:#808080">5V</div>
<div class="a" style="left:477px;top:281px;width:150px;height:16px;background:#c0c0c0"></div>
<div class="a" style="left:478px;top:296px;width:152px;height:33px;background:#c0c0c0"></div>
<div class="a" style="left:489px;top:327px;width:52px;height:16px;background:#c0c0c0"></div>
<div class="a" style="left:566px;top:327px;width:64px;height:16px;background:#c0c0c0"></div>
<div class="fld" style="left:477px;top:282px;width:13px;height:13px"></div>
<svg style="left:480px;top:285px" width="7" height="7" shape-rendering="crispEdges"><g fill="#000"><rect x="6" y="0" width="1" height="1"/><rect x="5" y="1" width="1" height="1"/><rect x="6" y="1" width="1" height="1"/><rect x="0" y="2" width="1" height="1"/><rect x="4" y="2" width="1" height="1"/><rect x="5" y="2" width="1" height="1"/><rect x="6" y="2" width="1" height="1"/><rect x="0" y="3" width="1" height="1"/><rect x="1" y="3" width="1" height="1"/><rect x="3" y="3" width="1" height="1"/><rect x="4" y="3" width="1" height="1"/><rect x="5" y="3" width="1" height="1"/><rect x="0" y="4" width="1" height="1"/><rect x="1" y="4" width="1" height="1"/><rect x="2" y="4" width="1" height="1"/><rect x="3" y="4" width="1" height="1"/><rect x="4" y="4" width="1" height="1"/><rect x="1" y="5" width="1" height="1"/><rect x="2" y="5" width="1" height="1"/><rect x="3" y="5" width="1" height="1"/><rect x="2" y="6" width="1" height="1"/></g></svg>
<div class="t" style="left:495px;top:283px;font-size:11px;letter-spacing:-0.33px;color:#000000">CH.A</div>
<div class="fld" style="left:533px;top:282px;width:13px;height:13px"></div>
<div class="t" style="left:552px;top:283px;font-size:11px;letter-spacing:-1.0px;color:#000000">ADD</div>
<div class="fld" style="left:533px;top:298px;width:13px;height:13px"></div>
<div class="t" style="left:551px;top:299px;font-size:11px;letter-spacing:-0.5px;color:#000000">SUB</div>
<div class="fld" style="left:533px;top:314px;width:13px;height:13px"></div>
<div class="t" style="left:551px;top:315px;font-size:11px;letter-spacing:-0.5px;color:#000000">X-Y</div>
<div class="fld" style="left:582px;top:282px;width:13px;height:13px"></div>
<div class="t" style="left:599px;top:284px;font-size:11px;letter-spacing:-0.67px;color:#000000">CH.B</div>
<svg style="left:495px;top:297px" width="12" height="12"><circle cx="6" cy="6" r="5" fill="#fff"/><path d="M9.9 2.1 A5.5 5.5 0 0 0 2.1 9.9" stroke="#808080" fill="none"/><path d="M9.2 2.8 A4.5 4.5 0 0 0 2.8 9.2" stroke="#000" fill="none" stroke-width="1.1"/><path d="M9.9 2.1 A5.5 5.5 0 0 1 2.1 9.9" stroke="#fff" fill="none"/><path d="M9.2 2.8 A4.5 4.5 0 0 1 2.8 9.2" stroke="#dfdfdf" fill="none"/></svg>
<div class="t" style="left:511px;top:298px;font-size:11px;letter-spacing:0.0px;color:#000000">DC</div>
<svg style="left:495px;top:313px" width="12" height="12"><circle cx="6" cy="6" r="5" fill="#fff"/><path d="M9.9 2.1 A5.5 5.5 0 0 0 2.1 9.9" stroke="#808080" fill="none"/><path d="M9.2 2.8 A4.5 4.5 0 0 0 2.8 9.2" stroke="#000" fill="none" stroke-width="1.1"/><path d="M9.9 2.1 A5.5 5.5 0 0 1 2.1 9.9" stroke="#fff" fill="none"/><path d="M9.2 2.8 A4.5 4.5 0 0 1 2.8 9.2" stroke="#dfdfdf" fill="none"/><circle cx="6" cy="6" r="1.8" fill="#000"/></svg>
<div class="t" style="left:512px;top:314px;font-size:11px;letter-spacing:-1.2px;color:#000000">AC</div>
<svg style="left:495px;top:329px" width="12" height="12"><circle cx="6" cy="6" r="5" fill="#fff"/><path d="M9.9 2.1 A5.5 5.5 0 0 0 2.1 9.9" stroke="#808080" fill="none"/><path d="M9.2 2.8 A4.5 4.5 0 0 0 2.8 9.2" stroke="#000" fill="none" stroke-width="1.1"/><path d="M9.9 2.1 A5.5 5.5 0 0 1 2.1 9.9" stroke="#fff" fill="none"/><path d="M9.2 2.8 A4.5 4.5 0 0 1 2.8 9.2" stroke="#dfdfdf" fill="none"/></svg>
<div class="t" style="left:511px;top:330px;font-size:11px;letter-spacing:-0.5px;color:#000000">GND</div>
<svg style="left:583px;top:298px" width="12" height="12"><circle cx="6" cy="6" r="5" fill="#fff"/><path d="M9.9 2.1 A5.5 5.5 0 0 0 2.1 9.9" stroke="#808080" fill="none"/><path d="M9.2 2.8 A4.5 4.5 0 0 0 2.8 9.2" stroke="#000" fill="none" stroke-width="1.1"/><path d="M9.9 2.1 A5.5 5.5 0 0 1 2.1 9.9" stroke="#fff" fill="none"/><path d="M9.2 2.8 A4.5 4.5 0 0 1 2.8 9.2" stroke="#dfdfdf" fill="none"/></svg>
<div class="t" style="left:599px;top:299px;font-size:11px;letter-spacing:0.0px;color:#000000">DC</div>
<svg style="left:583px;top:314px" width="12" height="12"><circle cx="6" cy="6" r="5" fill="#fff"/><path d="M9.9 2.1 A5.5 5.5 0 0 0 2.1 9.9" stroke="#808080" fill="none"/><path d="M9.2 2.8 A4.5 4.5 0 0 0 2.8 9.2" stroke="#000" fill="none" stroke-width="1.1"/><path d="M9.9 2.1 A5.5 5.5 0 0 1 2.1 9.9" stroke="#fff" fill="none"/><path d="M9.2 2.8 A4.5 4.5 0 0 1 2.8 9.2" stroke="#dfdfdf" fill="none"/><circle cx="6" cy="6" r="1.8" fill="#000"/></svg>
<div class="t" style="left:600px;top:315px;font-size:11px;letter-spacing:-1.2px;color:#000000">AC</div>
<svg style="left:583px;top:330px" width="12" height="12"><circle cx="6" cy="6" r="5" fill="#fff"/><path d="M9.9 2.1 A5.5 5.5 0 0 0 2.1 9.9" stroke="#808080" fill="none"/><path d="M9.2 2.8 A4.5 4.5 0 0 0 2.8 9.2" stroke="#000" fill="none" stroke-width="1.1"/><path d="M9.9 2.1 A5.5 5.5 0 0 1 2.1 9.9" stroke="#fff" fill="none"/><path d="M9.2 2.8 A4.5 4.5 0 0 1 2.8 9.2" stroke="#dfdfdf" fill="none"/></svg>
<div class="t" style="left:599px;top:331px;font-size:11px;letter-spacing:-0.5px;color:#000000">GND</div>
<svg style="left:557.3px;top:72px" width="80" height="80"><path d="M60.86 60.86 A29.5 29.5 0 1 0 19.14 60.86" stroke="#000" fill="none"/><circle cx="40" cy="40" r="26.5" stroke="#000" fill="none"/><path d="M55.91 24.09 A22.5 22.5 0 0 0 24.09 55.91" stroke="#e4e4e4" stroke-width="4.5" fill="none"/><path d="M55.91 24.09 A22.5 22.5 0 0 1 24.09 55.91" stroke="#808080" stroke-width="4.5" fill="none"/><circle cx="40" cy="40" r="20.5" fill="#0000ff"/><path d="M22.68 57.32 L13.84 66.16" stroke="#000"/><path d="M57.32 57.32 L66.16 66.16" stroke="#000"/><path d="M49.96 40.87 L59.43 41.70" stroke="#fff" stroke-width="2.2"/></svg>
<svg style="left:557.5px;top:184.6px" width="80" height="80"><path d="M60.86 60.86 A29.5 29.5 0 1 0 19.14 60.86" stroke="#000" fill="none"/><circle cx="40" cy="40" r="26.5" stroke="#000" fill="none"/><path d="M55.91 24.09 A22.5 22.5 0 0 0 24.09 55.91" stroke="#e4e4e4" stroke-width="4.5" fill="none"/><path d="M55.91 24.09 A22.5 22.5 0 0 1 24.09 55.91" stroke="#808080" stroke-width="4.5" fill="none"/><circle cx="40" cy="40" r="20.5" fill="#0000ff"/><path d="M22.68 57.32 L13.84 66.16" stroke="#000"/><path d="M57.32 57.32 L66.16 66.16" stroke="#000"/><path d="M49.06 35.77 L57.67 31.76" stroke="#fff" stroke-width="2.2"/></svg>
<svg style="left:469.4px;top:360.2px" width="80" height="80"><path d="M60.86 60.86 A29.5 29.5 0 1 0 19.14 60.86" stroke="#000" fill="none"/><circle cx="40" cy="40" r="26.5" stroke="#000" fill="none"/><path d="M55.91 24.09 A22.5 22.5 0 0 0 24.09 55.91" stroke="#e4e4e4" stroke-width="4.5" fill="none"/><path d="M55.91 24.09 A22.5 22.5 0 0 1 24.09 55.91" stroke="#808080" stroke-width="4.5" fill="none"/><circle cx="40" cy="40" r="20.5" fill="#0000ff"/><path d="M22.68 57.32 L13.84 66.16" stroke="#000"/><path d="M57.32 57.32 L66.16 66.16" stroke="#000"/><path d="M47.77 46.29 L55.15 52.27" stroke="#fff" stroke-width="2.2"/></svg>
<svg style="left:557.5px;top:360.5px" width="80" height="80"><path d="M60.86 60.86 A29.5 29.5 0 1 0 19.14 60.86" stroke="#000" fill="none"/><circle cx="40" cy="40" r="26.5" stroke="#000" fill="none"/><path d="M55.91 24.09 A22.5 22.5 0 0 0 24.09 55.91" stroke="#e4e4e4" stroke-width="4.5" fill="none"/><path d="M55.91 24.09 A22.5 22.5 0 0 1 24.09 55.91" stroke="#808080" stroke-width="4.5" fill="none"/><circle cx="40" cy="40" r="20.5" fill="#0000ff"/><path d="M22.68 57.32 L13.84 66.16" stroke="#000"/><path d="M57.32 57.32 L66.16 66.16" stroke="#000"/><path d="M31.61 45.45 L23.65 50.62" stroke="#fff" stroke-width="2.2"/></svg>
</body></html>
